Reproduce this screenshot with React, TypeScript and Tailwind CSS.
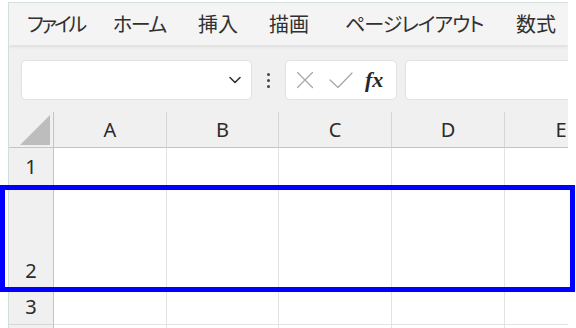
import React from "react";

const jp = { fontFamily: '"Noto Sans CJK JP", "Noto Sans", sans-serif', fontFeatureSettings: '"palt"' };

function ColHead({ label }: { label: string }) {
  return (
    <div className="h-[36px] bg-[#f0f0f0] border-r border-b border-r-[#d6d6d6] border-b-[#c4c4c4] flex items-center justify-center text-[20px] text-[#2b2b2b] font-['Noto_Sans',sans-serif]">
      {label}
    </div>
  );
}

function RowHead({ label, h, bottom }: { label: string; h: string; bottom?: boolean }) {
  return (
    <div
      className={`${h} bg-[#f0f0f0] border-r border-b border-r-[#c4c4c4] border-b-[#d6d6d6] flex justify-center ${bottom ? "items-end pb-[8px]" : "items-center"} text-[20px] leading-none text-[#2b2b2b] font-['Noto_Sans',sans-serif]`}
    >
      {label}
    </div>
  );
}

function Cell({ h }: { h: string }) {
  return <div className={`${h} bg-white border-r border-b border-[#e3e3e3]`} />;
}

export default function App() {
  const cols = ["A", "B", "C", "D", "E"];
  const rows: { label: string; h: string; bottom?: boolean }[] = [
    { label: "1", h: "h-[38px]" },
    { label: "2", h: "h-[104px]", bottom: true },
    { label: "3", h: "h-[35px]" },
    { label: "", h: "h-[35px]" },
  ];
  const menu: { t: string; w: string; tr: string }[] = [
    { t: "ファイル", w: "w-[86px]", tr: "tracking-[-3px]" },
    { t: "ホーム", w: "w-[85px]", tr: "tracking-[-1.5px]" },
    { t: "挿入", w: "w-[71px]", tr: "tracking-normal" },
    { t: "描画", w: "w-[76px]", tr: "tracking-normal" },
    { t: "ページレイアウト", w: "w-[171px]", tr: "tracking-[-1px]" },
    { t: "数式", w: "w-[60px]", tr: "tracking-normal" },
  ];
  return (
    <div className="relative w-[576px] h-[328px] bg-white overflow-hidden">
      <div className="ml-[8px] mt-[2px] w-[560px] h-[326px] border-l border-t border-[#d3dfda] overflow-hidden bg-[#f0f0f0]">
        {/* menu bar */}
        <div className="relative z-10 h-[42px] bg-[#f4f4f4] shadow-[0_2px_3px_rgba(0,0,0,0.07)] flex items-center pl-[18px] text-[20px] text-[#303030] whitespace-nowrap" style={jp}>
          {menu.map((m) => (
            <span key={m.t} className={`${m.w} ${m.tr} shrink-0 leading-none`}>
              {m.t}
            </span>
          ))}
        </div>
        {/* toolbar */}
        <div className="h-[67px] bg-[#f0f0f0] flex items-start pt-[15px] pl-[12px]">
          <div className="w-[231px] h-[40px] bg-white rounded-[5px] border border-[#e2e2e2] flex items-center justify-end pr-[8px] shrink-0">
            <svg width="16" height="16" viewBox="0 0 16 16" fill="none" stroke="#333" strokeWidth="1.6" strokeLinecap="round" strokeLinejoin="round">
              <path d="M3 5.5 L8 10.5 L13 5.5" />
            </svg>
          </div>
          <div className="w-[33px] h-[40px] flex flex-col items-center justify-center gap-[3px] shrink-0">
            <span className="w-[3px] h-[3px] rounded-full bg-[#444]" />
            <span className="w-[3px] h-[3px] rounded-full bg-[#444]" />
            <span className="w-[3px] h-[3px] rounded-full bg-[#444]" />
          </div>
          <div className="w-[112px] h-[40px] bg-white rounded-[5px] border border-[#e2e2e2] flex items-center pl-[10px] shrink-0">
            <svg width="18" height="18" viewBox="0 0 18 18" fill="none" stroke="#a6a6a6" strokeWidth="1.2" strokeLinecap="round">
              <path d="M1.5 1.5 L16.5 16.5 M16.5 1.5 L1.5 16.5" />
            </svg>
            <svg className="ml-[15px]" width="24" height="18" viewBox="0 0 24 18" fill="none" stroke="#a6a6a6" strokeWidth="1.2" strokeLinecap="round" strokeLinejoin="round">
              <path d="M1 9 L9 16.5 L23 2" />
            </svg>
            <span className="ml-[12px] text-[22px] italic font-bold text-[#262626] leading-none font-['Liberation_Serif',serif]">fx</span>
          </div>
          <div className="ml-[8px] w-[170px] h-[40px] bg-white rounded-[5px] border border-[#e2e2e2] shrink-0" />
        </div>
        {/* grid */}
        <div className="grid grid-cols-[45px_113px_112px_113px_113px_113px] w-[609px]">
          <div className="h-[36px] bg-[#f0f0f0] border-r border-b border-r-[#c4c4c4] border-b-[#c4c4c4] relative">
            <svg className="absolute left-0 top-0" width="44" height="35" viewBox="0 0 44 35">
              <polygon points="41,3 41,33 11,33" fill="#bdbdbd" />
            </svg>
          </div>
          {cols.map((c) => (
            <ColHead key={c} label={c} />
          ))}
          {rows.map((r, i) => (
            <React.Fragment key={i}>
              <RowHead label={r.label} h={r.h} bottom={r.bottom} />
              {cols.map((c) => (
                <Cell key={c} h={r.h} />
              ))}
            </React.Fragment>
          ))}
        </div>
      </div>
      {/* selection highlight */}
      <div className="absolute left-0 top-[185px] w-[575px] h-[107px] border-[5px] border-[#0000ff] pointer-events-none" />
    </div>
  );
}
